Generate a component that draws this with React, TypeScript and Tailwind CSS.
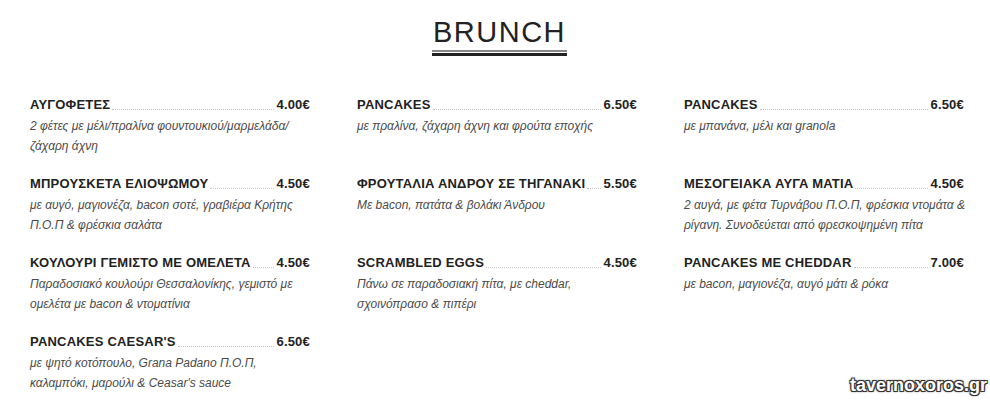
type Item = { name: string; price: string; desc: string }

const items: Item[] = [
  { name: 'ΑΥΓΟΦΕΤΕΣ', price: '4.00€', desc: '2 φέτες με μέλι/πραλίνα φουντουκιού/μαρμελάδα/ ζάχαρη άχνη' },
  { name: 'PANCAKES', price: '6.50€', desc: 'με πραλίνα, ζάχαρη άχνη και φρούτα εποχής' },
  { name: 'PANCAKES', price: '6.50€', desc: 'με μπανάνα, μέλι και granola' },
  { name: 'ΜΠΡΟΥΣΚΕΤΑ ΕΛΙΟΨΩΜΟΥ', price: '4.50€', desc: 'με αυγό, μαγιονέζα, bacon σοτέ, γραβιέρα Κρήτης Π.Ο.Π & φρέσκια σαλάτα' },
  { name: 'ΦΡΟΥΤΑΛΙΑ ΑΝΔΡΟΥ ΣΕ ΤΗΓΑΝΑΚΙ', price: '5.50€', desc: 'Με bacon, πατάτα & βολάκι Άνδρου' },
  { name: 'ΜΕΣΟΓΕΙΑΚΑ ΑΥΓΑ ΜΑΤΙΑ', price: '4.50€', desc: '2 αυγά, με φέτα Τυρνάβου Π.Ο.Π, φρέσκια ντομάτα & ρίγανη. Συνοδεύεται από φρεσκοψημένη πίτα' },
  { name: 'ΚΟΥΛΟΥΡΙ ΓΕΜΙΣΤΟ ΜΕ ΟΜΕΛΕΤΑ', price: '4.50€', desc: 'Παραδοσιακό κουλούρι Θεσσαλονίκης, γεμιστό με ομελέτα με bacon & ντοματίνια' },
  { name: 'SCRAMBLED EGGS', price: '4.50€', desc: 'Πάνω σε παραδοσιακή πίτα, με cheddar, σχοινόπρασο & πιπέρι' },
  { name: 'PANCAKES ME CHEDDAR', price: '7.00€', desc: 'με bacon, μαγιονέζα, αυγό μάτι & ρόκα' },
  { name: "PANCAKES CAESAR'S", price: '6.50€', desc: "με ψητό κοτόπουλο, Grana Padano Π.Ο.Π, καλαμπόκι, μαρούλι & Ceasar's sauce" },
]

function MenuItem({ item }: { item: Item }) {
  return (
    <div>
      <div className="flex items-end pr-[3px] text-[13px] leading-[20px] font-bold tracking-[0.2px] text-[#222]">
        <span className="whitespace-nowrap">{item.name}</span>
        <span className="flex-1 mx-[2px] mb-[5px] border-b border-dotted border-[#c4c4c4]" />
        <span className="whitespace-nowrap">{item.price}</span>
      </div>
      <p className="mt-[1px] text-[12px] leading-[20px] italic text-[#4a4a4a]">{item.desc}</p>
    </div>
  )
}

export default function App() {
  return (
    <div className="relative w-[990px] h-[400px] bg-white overflow-hidden font-['Liberation_Sans',Arial,sans-serif]">
      {/* Τίτλος */}
      <div className="flex justify-center pt-[15px] pl-[9px]">
        <div className="flex flex-col items-center">
          <h1 className="text-[29px] leading-[34px] tracking-[1.5px] text-[#222] px-[2px]">BRUNCH</h1>
          <div className="w-[135px] h-[2px] mt-[1px] bg-[#888]" />
          <div className="w-[135px] h-[3px] mt-[1px] bg-[#222]" />
        </div>
      </div>

      {/* Πιάτα */}
      <div className="grid grid-cols-[283px_283px_283px] gap-x-[44px] gap-y-[18px] pl-[30px] pt-[39px]">
        {items.map((item, i) => (
          <MenuItem key={i} item={item} />
        ))}
      </div>

      <div className="absolute right-[3px] bottom-[1px] text-[18px] font-bold text-white [text-shadow:-1px_-1px_0_#333,1px_-1px_0_#333,-1px_1px_0_#333,1px_1px_0_#333,0_0_3px_#000]">
        tavernoxoros.gr
      </div>
    </div>
  )
}
